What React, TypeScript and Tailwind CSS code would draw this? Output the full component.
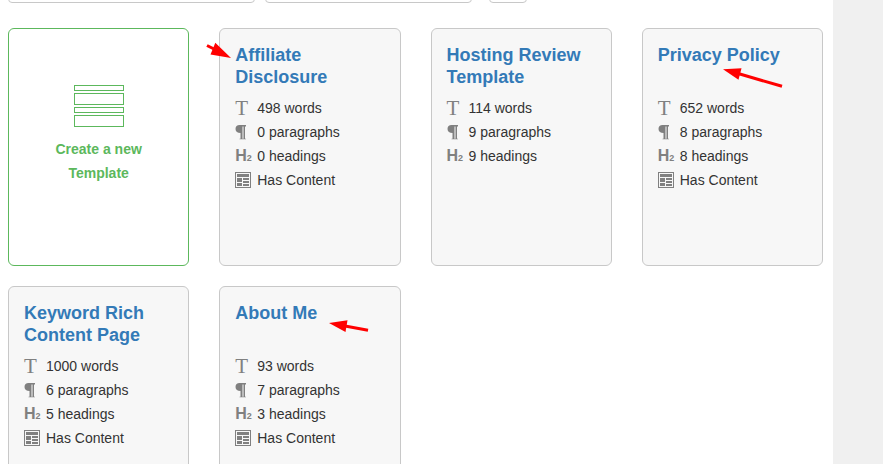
import type { ReactNode } from 'react';

type Template = {
  title: string;
  words: number;
  paragraphs: number;
  headings: number;
  hasContent?: boolean;
  arrow?: { shaft: string; head: string };
};

const templates: Template[] = [
  {
    title: 'Affiliate Disclosure',
    words: 498,
    paragraphs: 0,
    headings: 0,
    hasContent: true,
    arrow: { shaft: 'M-12 17.5L-4 21.5', head: '12,30 -3.7,14.7 -5,18 -8.5,26.5' },
  },
  { title: 'Hosting Review Template', words: 114, paragraphs: 9, headings: 9 },
  {
    title: 'Privacy Policy',
    words: 652,
    paragraphs: 8,
    headings: 8,
    hasContent: true,
    arrow: { shaft: 'M140 58.3L97 45.8', head: '81,41.3 99.5,40.3 96.5,51.7' },
  },
  { title: 'Keyword Rich Content Page', words: 1000, paragraphs: 6, headings: 5, hasContent: true },
  {
    title: 'About Me',
    words: 93,
    paragraphs: 7,
    headings: 3,
    hasContent: true,
    arrow: { shaft: 'M149 44.2L126 40', head: '110,37 128.5,34.3 126.5,46' },
  },
];

function TextIcon() {
  return <span className="font-['Liberation_Serif',serif] text-[21px]">T</span>;
}

function ParagraphIcon() {
  return (
    <svg width="12" height="16" viewBox="0 0 12 16" fill="currentColor" className="block">
      <path d="M4.5 1H11V2.5H10V15H8.5V2.5H7.5V15H5.5V9C2.5 9 .5 7.5 .5 5S2 1 4.5 1Z" />
      <path d="M4.5 14.5H11V15.5H4.5Z" opacity=".5" />
    </svg>
  );
}

function HeadingIcon() {
  return (
    <span className="flex items-baseline font-bold">
      <span className="text-base leading-6">H</span>
      <span className="text-[9px] leading-3">2</span>
    </span>
  );
}

function ContentIcon() {
  return (
    <svg width="16" height="16" viewBox="0 0 16 16" fill="currentColor" className="block">
      <path
        fillRule="evenodd"
        d="M0 0H16V16H0ZM1 1V15H15V1ZM2 2H14V5H2ZM2 6H7V10H2ZM8 6H14V8H8ZM8 9H14V11H8ZM2 11H7V14H2ZM8 12H14V14H8Z"
      />
    </svg>
  );
}

function Stat({ icon, children }: { icon: ReactNode; children: ReactNode }) {
  return (
    <li className="flex h-6 items-center">
      <span aria-hidden="true" className="flex h-6 w-[22px] shrink-0 items-center leading-6 text-[#808080]">
        {icon}
      </span>
      {children}
    </li>
  );
}

function TemplateCard({ template }: { template: Template }) {
  return (
    <article className="relative rounded-md border border-[#c8c8c8] bg-[#f7f7f7] p-[15px]">
      <h2 className="mb-2 min-h-11 text-lg leading-[22px] font-bold text-[#337ab7]">
        <a href="#template">{template.title}</a>
      </h2>
      <ul className="text-sm text-[#333]">
        <Stat icon={<TextIcon />}>{template.words} words</Stat>
        <Stat icon={<ParagraphIcon />}>{template.paragraphs} paragraphs</Stat>
        <Stat icon={<HeadingIcon />}>{template.headings} headings</Stat>
        {template.hasContent && <Stat icon={<ContentIcon />}>Has Content</Stat>}
      </ul>
      {template.arrow && (
        <svg
          aria-hidden="true"
          width="160"
          height="64"
          viewBox="0 0 160 64"
          className="pointer-events-none absolute -top-px -left-px overflow-visible text-[#ff0000]"
        >
          <path d={template.arrow.shaft} stroke="currentColor" strokeWidth="3" />
          <polygon points={template.arrow.head} fill="currentColor" />
        </svg>
      )}
    </article>
  );
}

function CreateCard() {
  return (
    <button
      type="button"
      className="flex flex-col items-center justify-start rounded-md border border-[#5cb85c] bg-white px-10 pt-14 text-sm leading-6 font-bold text-[#5cb85c]"
    >
      <span aria-hidden="true" className="mb-2.5 flex w-[50px] flex-col gap-0.5">
        <span className="h-1.5 border border-[#5cb85c]" />
        <span className="h-3 border border-[#5cb85c]" />
        <span className="h-1.5 border border-[#5cb85c]" />
        <span className="h-3 border border-[#5cb85c]" />
      </span>
      Create a new Template
    </button>
  );
}

export default function App() {
  return (
    <div className="flex h-screen overflow-hidden bg-[#f0f0f0] font-['Liberation_Sans',Arial,sans-serif]">
      <main className="min-w-0 flex-1 bg-white pr-2.5 pl-2">
        <div className="mb-[25px] flex h-[3px] items-end overflow-hidden">
          <input
            type="text"
            aria-label="Search templates"
            className="mr-2.5 h-[34px] w-[247px] shrink-0 rounded border border-[#c8c8c8]"
          />
          <select
            aria-label="Category"
            className="mr-[17px] h-[34px] w-[207px] shrink-0 appearance-none rounded border border-[#c8c8c8]"
          />
          <button
            type="button"
            aria-label="Search"
            className="h-[34px] w-[38px] shrink-0 rounded border border-[#c8c8c8]"
          />
        </div>
        <div className="grid auto-rows-[238px] grid-cols-4 gap-x-[30px] gap-y-5">
          <CreateCard />
          {templates.map((template) => (
            <TemplateCard key={template.title} template={template} />
          ))}
        </div>
      </main>
      <aside className="w-[50px] shrink-0" />
    </div>
  );
}
